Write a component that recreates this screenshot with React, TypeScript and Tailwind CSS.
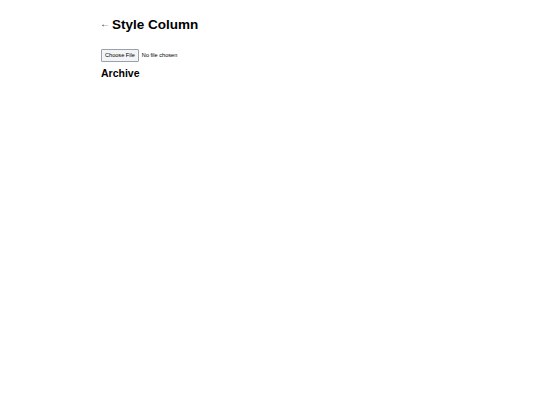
import React from 'react';

export default function App() {
  return (
    <div className="min-h-[405px] bg-white text-black" style={{ fontFamily: '"Liberation Sans", Arial, sans-serif' }}>
      <div className="mx-auto w-[338px] pt-[15px]">
        <h1 className="flex items-center text-[13.5px] font-bold leading-[20px]">
          <button className="-ml-[1px] mb-[2px] w-[12px] text-left text-[10px] font-normal leading-[18px] text-gray-700">←</button>
          Style Column
        </h1>
        <div className="mt-[14px]">
          <input
            type="file"
            className="block text-[5.6px] leading-[9px] file:mr-[3px] file:rounded-[1px] file:border file:border-gray-400 file:bg-gray-100 file:px-[3px] file:py-[1px] file:text-[5.6px] file:text-black"
          />
        </div>
        <h2 className="mt-[5px] text-[10.5px] font-bold leading-[13px]">Archive</h2>
      </div>
    </div>
  );
}
